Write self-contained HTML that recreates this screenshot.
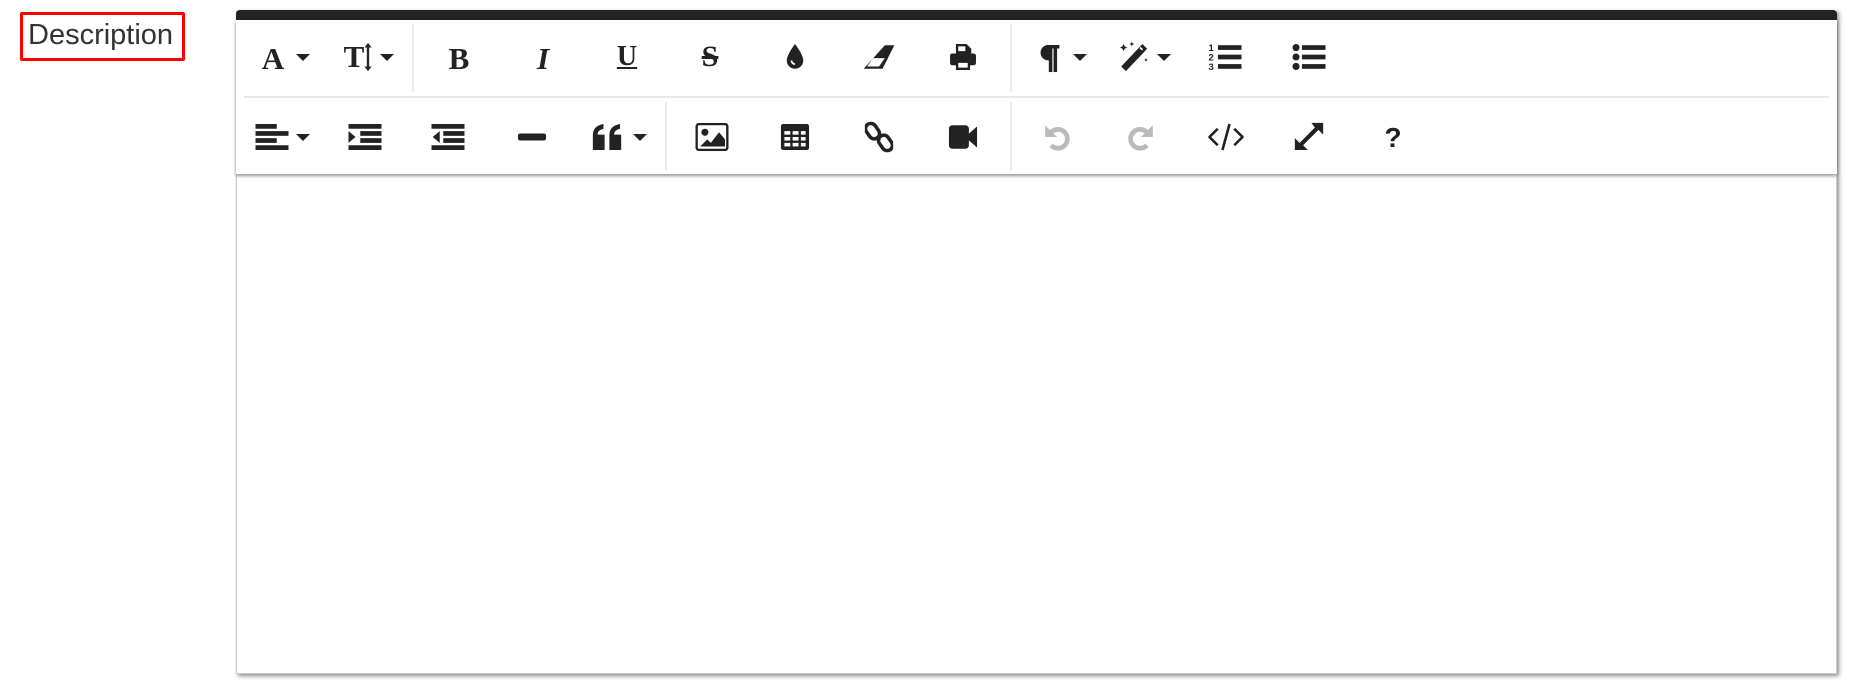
<!DOCTYPE html>
<html><head><meta charset="utf-8"><style>
*{margin:0;padding:0;box-sizing:border-box}
body{width:1850px;height:682px;background:#fff;position:relative;overflow:hidden;font-family:"Liberation Sans",sans-serif;color:#222}
.lbl{position:absolute;left:20px;top:12px;width:165px;height:49px;border:3px solid #f00;border-radius:2px;font-size:29px;color:#333;line-height:40px;padding-left:5px;white-space:nowrap}
.ed{position:absolute;left:236px;top:10px;width:1601px;height:664px;border:1px solid #ccc;border-top:none;box-shadow:2px 2px 4px rgba(0,0,0,.45);background:#fff}
.bar{position:absolute;left:236px;top:10px;width:1601px;height:10px;background:#222;border-radius:4px 4px 0 0}
.tb{position:absolute;left:236px;top:20px;width:1601px;height:154px;box-shadow:0 2px 3px rgba(0,0,0,.4);background:#fff}
.hd{position:absolute;left:244px;top:96px;width:1585px;height:2px;background:#e8e8e8}
.vs{position:absolute;width:2px;background:#eaeaea}
.i{position:absolute;width:32px;height:32px;margin-left:-16px;margin-top:-16px;display:flex;align-items:center;justify-content:center}
.i svg{display:block;transform:scale(1.18)}
.t{font-family:"Liberation Serif",serif;font-weight:bold;font-size:31px;line-height:32px}
.c{position:absolute;width:0;height:0;border-left:7px solid transparent;border-right:7px solid transparent;border-top:7px solid #222;margin-left:-7px;margin-top:-3px}
</style></head><body>
<div class="lbl">Description</div>
<div class="ed"></div>
<div class="tb"></div>
<div class="bar"></div>
<div class="hd"></div>
<div class="vs" style="left:412px;top:24px;height:68px"></div>
<div class="vs" style="left:1010px;top:24px;height:68px"></div>
<div class="vs" style="left:665px;top:102px;height:68px"></div>
<div class="vs" style="left:1010px;top:102px;height:68px"></div>

<div class="i t" style="left:273px;top:59px">A</div><div class="c" style="left:303px;top:57px"></div>
<div class="i" style="left:358px;top:57px"><span class="t">T</span><svg width="8" height="26" viewBox="0 0 8 26"><path d="M4 1L1 5h2v16H1l3 4 3-4H5V5h2z" fill="#222"/></svg></div><div class="c" style="left:387px;top:57px"></div>
<div class="i t" style="left:459px;top:59px">B</div>
<div class="i t" style="left:543px;top:59px;font-style:italic">I</div>
<div class="i t" style="left:627px;top:57px;font-size:28px;text-decoration:underline">U</div>
<div class="i t" style="left:710px;top:57px;font-size:30px;text-decoration:line-through">S</div>
<div class="i" style="left:795px;top:57px"><svg width="16" height="22" viewBox="0 0 16 22"><path d="M8 0C8 0 1 9 1 14a7 7 0 0 0 14 0C15 9 8 0 8 0z" fill="#222"/><path d="M5 14a3 3 0 0 0 3 3" stroke="#fff" stroke-width="1.5" fill="none"/></svg></div>
<div class="i" style="left:879px;top:57px"><svg width="30" height="22" viewBox="0 0 30 22"><path d="M20 1h8l-10 20H2z" fill="#222"/><path d="M10 12h10l-5 7H5z" fill="#fff"/></svg></div>
<div class="i" style="left:963px;top:57px"><svg width="24" height="24" viewBox="0 0 24 24"><path d="M6 1h9l4 4v4H6z" fill="#222"/><path d="M8 3h6v4H8z" fill="#fff"/><rect x="1" y="9" width="22" height="10" rx="2" fill="#222"/><path d="M6 15h12v8H6z" fill="#222"/><path d="M8 17h8v4H8z" fill="#fff"/></svg></div>
<div class="i" style="left:1050px;top:58px"><svg width="18" height="24" viewBox="0 0 18 24"><path d="M7 1h10v3h-2v20h-3V4h-1v20H8V14A6.5 6.5 0 0 1 7 1z" fill="#222"/></svg></div><div class="c" style="left:1080px;top:57px"></div>
<div class="i" style="left:1133px;top:57px"><svg width="28" height="28" viewBox="0 0 28 28"><path d="M22 3l4 4L8 26l-4-4z" fill="#222"/><path d="M20 6l2 2" stroke="#fff" stroke-width="1.5"/><path d="M6 3l1 2 2 1-2 1-1 2-1-2-2-1 2-1zM13 1l.6 1.4 1.4.6-1.4.6L13 5l-.6-1.4L11 3l1.4-.6zM25 15l.5 1 1 .5-1 .5-.5 1-.5-1-1-.5 1-.5z" fill="#222"/></svg></div><div class="c" style="left:1164px;top:57px"></div>
<div class="i" style="left:1225px;top:57px"><svg width="28" height="26" viewBox="0 0 28 26"><text x="0" y="8" font-size="8" font-weight="bold" font-family="Liberation Sans" fill="#222">1</text><text x="0" y="16" font-size="8" font-weight="bold" font-family="Liberation Sans" fill="#222">2</text><text x="0" y="24" font-size="8" font-weight="bold" font-family="Liberation Sans" fill="#222">3</text><rect x="8" y="3" width="20" height="4" fill="#222"/><rect x="8" y="11" width="20" height="4" fill="#222"/><rect x="8" y="19" width="20" height="4" fill="#222"/></svg></div>
<div class="i" style="left:1309px;top:57px"><svg width="28" height="24" viewBox="0 0 28 24"><circle cx="3" cy="4" r="3" fill="#222"/><circle cx="3" cy="12" r="3" fill="#222"/><circle cx="3" cy="20" r="3" fill="#222"/><rect x="8" y="2" width="20" height="4" fill="#222"/><rect x="8" y="10" width="20" height="4" fill="#222"/><rect x="8" y="18" width="20" height="4" fill="#222"/></svg></div>

<div class="i" style="left:272px;top:137px"><svg width="28" height="24" viewBox="0 0 28 24"><rect x="0" y="1" width="18" height="4" fill="#222"/><rect x="0" y="7" width="28" height="4" fill="#222"/><rect x="0" y="13" width="18" height="4" fill="#222"/><rect x="0" y="19" width="28" height="4" fill="#222"/></svg></div><div class="c" style="left:303px;top:137px"></div>
<div class="i" style="left:365px;top:137px"><svg width="28" height="24" viewBox="0 0 28 24"><rect x="0" y="1" width="28" height="4" fill="#222"/><rect x="10" y="7" width="18" height="4" fill="#222"/><rect x="10" y="13" width="18" height="4" fill="#222"/><rect x="0" y="19" width="28" height="4" fill="#222"/><path d="M0 7l6 5-6 5z" fill="#222"/></svg></div>
<div class="i" style="left:448px;top:137px"><svg width="28" height="24" viewBox="0 0 28 24"><rect x="0" y="1" width="28" height="4" fill="#222"/><rect x="10" y="7" width="18" height="4" fill="#222"/><rect x="10" y="13" width="18" height="4" fill="#222"/><rect x="0" y="19" width="28" height="4" fill="#222"/><path d="M7 7l-6 5 6 5z" fill="#222"/></svg></div>
<div class="i" style="left:532px;top:137px"><svg width="24" height="8" viewBox="0 0 24 8"><rect x="0" y="1" width="24" height="6" rx="2" fill="#222"/></svg></div>
<div class="i" style="left:607px;top:137px"><svg width="26" height="22" viewBox="0 0 26 22"><path d="M1 10C1 4 4 1 10 0v4C6 5 5 7 5 9h6v13H1zM15 10c0-6 3-9 9-10v4c-4 1-5 3-5 5h6v13H15z" fill="#222"/></svg></div><div class="c" style="left:640px;top:137px"></div>
<div class="i" style="left:712px;top:137px"><svg width="28" height="24" viewBox="0 0 28 24"><rect x="1" y="1" width="26" height="22" rx="2" fill="none" stroke="#222" stroke-width="2"/><circle cx="8" cy="8" r="3" fill="#222"/><path d="M4 20l6-6 3 3 7-9 5 6v6z" fill="#222"/></svg></div>
<div class="i" style="left:795px;top:137px"><svg width="24" height="22" viewBox="0 0 24 22"><rect x="0" y="0" width="24" height="22" rx="2" fill="#222"/><g fill="#fff"><rect x="3" y="6" width="5" height="3"/><rect x="10" y="6" width="5" height="3"/><rect x="17" y="6" width="4" height="3"/><rect x="3" y="11" width="5" height="3"/><rect x="10" y="11" width="5" height="3"/><rect x="17" y="11" width="4" height="3"/><rect x="3" y="16" width="5" height="3"/><rect x="10" y="16" width="5" height="3"/><rect x="17" y="16" width="4" height="3"/></g></svg></div>
<div class="i" style="left:879px;top:137px"><svg width="24" height="26" viewBox="0 0 24 26"><rect x="2" y="1" width="9" height="14" rx="4.5" fill="none" stroke="#222" stroke-width="3" transform="rotate(-35 6.5 8)"/><rect x="13" y="11" width="9" height="14" rx="4.5" fill="none" stroke="#222" stroke-width="3" transform="rotate(-35 17.5 18)"/></svg></div>
<div class="i" style="left:963px;top:137px"><svg width="24" height="22" viewBox="0 0 24 22"><rect x="0" y="1" width="17" height="20" rx="3" fill="#222"/><path d="M16 9l8-7v18l-8-7z" fill="#222"/></svg></div>
<div class="i" style="left:1057px;top:137px"><svg width="24" height="24" viewBox="0 0 24 24"><path d="M7 8A8 8 0 1 1 7 19" fill="none" stroke="#bbb" stroke-width="4"/><path d="M2 2v10h10z" fill="#bbb"/></svg></div>
<div class="i" style="left:1141px;top:137px"><svg width="24" height="24" viewBox="0 0 24 24"><path d="M17 8A8 8 0 1 0 17 19" fill="none" stroke="#bbb" stroke-width="4"/><path d="M22 2v10H12z" fill="#bbb"/></svg></div>
<div class="i" style="left:1226px;top:137px"><svg width="30" height="24" viewBox="0 0 30 24"><path d="M8 5L1 12l7 7M22 5l7 7-7 7M18 1l-6 22" fill="none" stroke="#222" stroke-width="2.2"/></svg></div>
<div class="i" style="left:1309px;top:137px"><svg width="26" height="26" viewBox="0 0 26 26"><path d="M15 1h10v10l-4-4L8 20l4 4H1V14l4 4L18 5z" fill="#222"/></svg></div>
<div class="i" style="left:1393px;top:138px;font-weight:bold;font-size:28px">?</div>
</body></html>
